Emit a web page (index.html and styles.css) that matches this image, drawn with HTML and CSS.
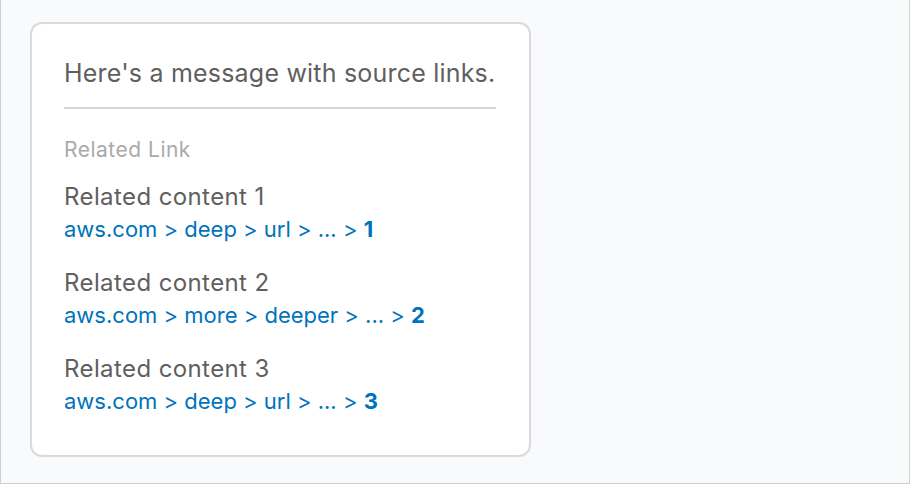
FILE: index.html
```html
<!DOCTYPE html>
<html>
<head>
<meta charset="utf-8">
<link rel="stylesheet" href="styles.css">
</head>
<body>
<div class="frame">
  <div class="card">
    <p class="message">Here's a message with source links.</p>
    <hr class="divider">
    <div class="label">Related Link</div>
    <ul class="links">
      <li class="item">
        <div class="title">Related content 1</div>
        <a class="path" href="#">aws.com &gt; deep &gt; url &gt; ... &gt; <b>1</b></a>
      </li>
      <li class="item">
        <div class="title">Related content 2</div>
        <a class="path" href="#">aws.com &gt; more &gt; deeper &gt; ... &gt; <b>2</b></a>
      </li>
      <li class="item">
        <div class="title">Related content 3</div>
        <a class="path" href="#">aws.com &gt; deep &gt; url &gt; ... &gt; <b>3</b></a>
      </li>
    </ul>
  </div>
</div>
</body>
</html>
```

FILE: styles.css
```css
html, body {
  margin: 0;
  padding: 0;
}
body {
  background: #f9fafb;
  font-family: Inter, "Liberation Sans", sans-serif;
}
.frame {
  box-sizing: border-box;
  width: 910px;
  height: 484px;
  border: 1px solid #cfcfcf;
  border-top: none;
  background: #f9fafb;
  padding: 22px 0 0 29px;
}
.card {
  box-sizing: border-box;
  width: 501px;
  height: 435px;
  background: #fff;
  border: 2px solid #dadada;
  border-radius: 12px;
  padding: 33px 33px 0 32px;
}
.message {
  margin: 0;
  font-size: 25px;
  line-height: 32px;
  letter-spacing: 0.2px;
  white-space: nowrap;
  color: #5f5f5f;
}
.divider {
  margin: 18px 0 0 0;
  border: none;
  height: 2px;
  background: #d5d5d5;
}
.label {
  margin-top: 27px;
  font-size: 21px;
  line-height: 28px;
  letter-spacing: 0.5px;
  color: #aaaaaa;
}
.links {
  list-style: none;
  margin: 16px 0 0 0;
  padding: 0;
  display: flex;
  flex-direction: column;
  gap: 22px;
}
.item {
  display: flex;
  flex-direction: column;
}
.title {
  font-size: 24px;
  line-height: 34px;
  letter-spacing: 0.4px;
  color: #5f5f5f;
}
.path {
  font-size: 22px;
  line-height: 30px;
  color: #0073bb;
  text-decoration: none;
}
.path b {
  font-weight: 700;
}
```
